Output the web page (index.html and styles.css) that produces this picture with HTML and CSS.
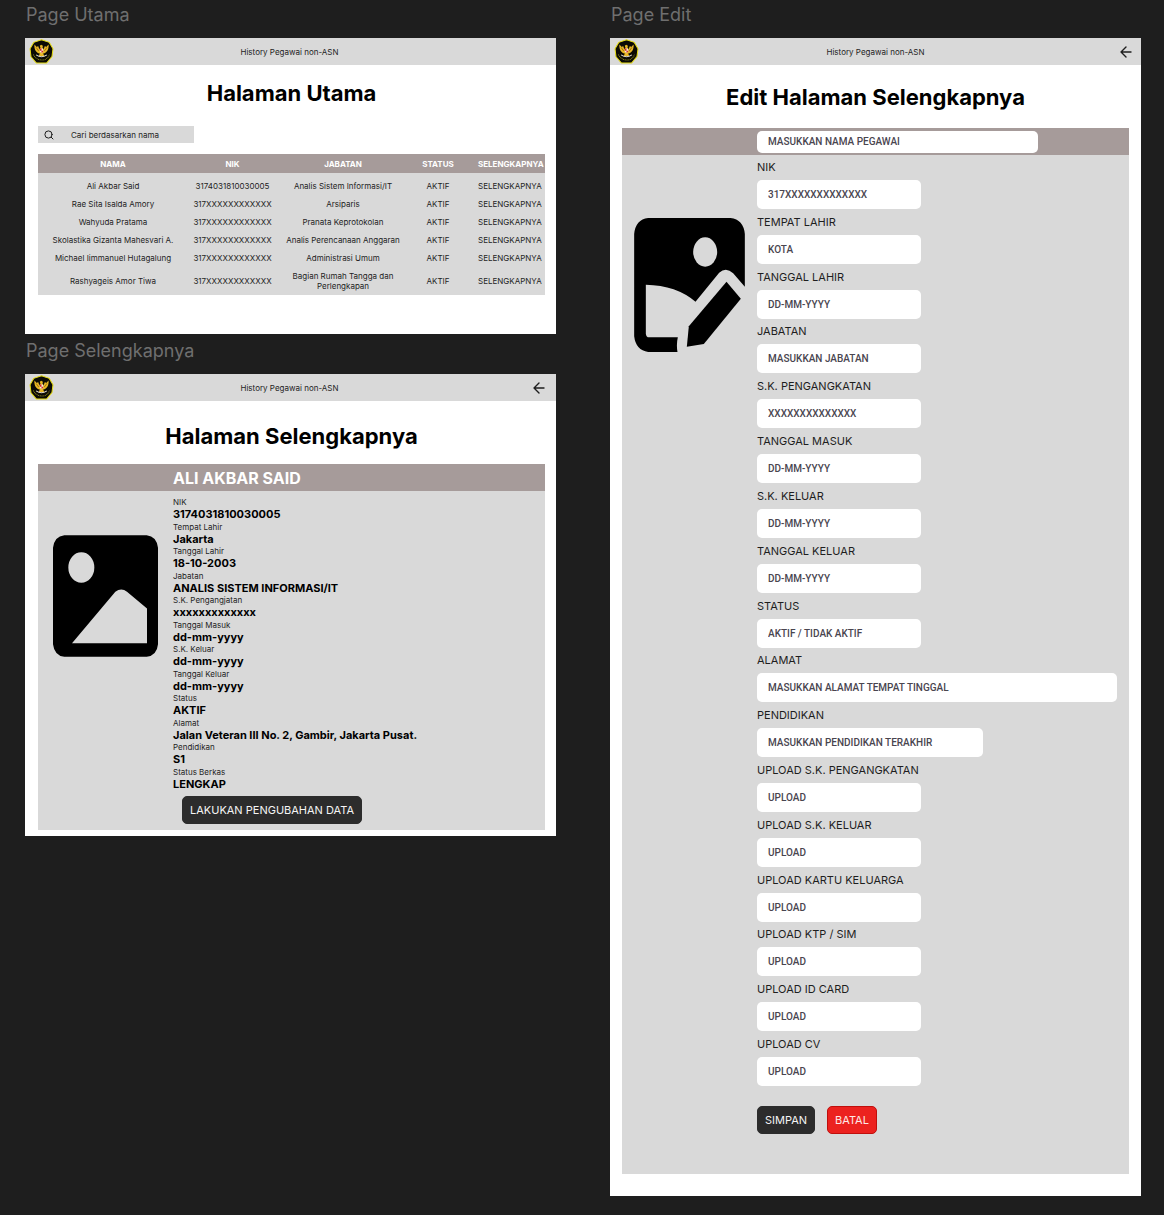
FILE: index.html
```html
<!DOCTYPE html>
<html lang="id">
<head>
<meta charset="utf-8">
<meta name="viewport" content="width=device-width, initial-scale=1">
<title>History Pegawai non-ASN</title>
<link rel="stylesheet" href="styles.css">
</head>
<body>
<svg class="sprite" aria-hidden="true">
  <symbol id="emblem" viewBox="0 0 72 74">
    <path d="M36 2 59 10 70 29 67 52 51 71H21L5 53 2 29 13 10Z" fill="#0b0a05" stroke="#e6dc14" stroke-width="3"/>
    <path d="M15 16C14 30 19 40 31 43L28 50H44L41 43C53 40 58 30 57 16L50 24 46 21 42 31 39 27 40 20 35 17 31 20 33 27 30 31 26 21 22 24Z" fill="#e9b824"/>
    <path d="M20 25 28 36M52 25 44 36" stroke="#7a5209" stroke-width="2"/>
    <path d="M31 28H41V37L36 43 31 37Z" fill="#f3eee4"/>
    <path d="M31 28H36V35H31ZM36 35H41V37L36 42Z" fill="#cf2420"/>
    <path d="M20 47Q36 58 52 47" fill="none" stroke="#ddd9c8" stroke-width="3"/>
    <path d="M12 46Q19 61 36 62T60 46" fill="none" stroke="#8b8516" stroke-width="3" stroke-dasharray="3 2"/>
  </symbol>
  <symbol id="arrow-left" viewBox="0 0 16 16">
    <path d="M13 8H3M8 3 3 8 8 13" fill="none" stroke="#1e1e1e" stroke-width="1.400" stroke-linecap="round" stroke-linejoin="round"/>
  </symbol>
</svg>

<main class="board">
  <div class="column column-overview">
    <section class="page">
      <h2 class="page-label">Page Utama</h2>
      <div class="frame frame-home">
        <header class="topbar">
          <svg class="emblem"><use href="#emblem"/></svg>
          <span class="topbar-title">History Pegawai non-ASN</span>
        </header>
        <div class="content">
          <h1 class="title">Halaman Utama</h1>
          <label class="search">
            <svg class="search-icon" viewBox="0 0 10 10" role="img" aria-label="Cari"><circle cx="4.500" cy="4.500" r="3.600"/><path d="M7.200 7.200 9 9"/></svg>
            <input class="search-input" type="search" placeholder="Cari berdasarkan nama">
          </label>
          <table class="staff">
            <colgroup><col><col class="col-nik"><col class="col-role"><col class="col-status"><col class="col-more"></colgroup>
            <thead>
              <tr><th>NAMA</th><th>NIK</th><th>JABATAN</th><th>STATUS</th><th class="more">SELENGKAPNYA</th></tr>
            </thead>
            <tbody>
              <tr><td>Ali Akbar Said</td><td>3174031810030005</td><td>Analis Sistem Informasi/IT</td><td>AKTIF</td><td class="more"><a href="#detail">SELENGKAPNYA</a></td></tr>
              <tr><td>Rae Sita Isalda Amory</td><td>317XXXXXXXXXXXX</td><td>Arsiparis</td><td>AKTIF</td><td class="more"><a href="#detail">SELENGKAPNYA</a></td></tr>
              <tr><td>Wahyuda Pratama</td><td>317XXXXXXXXXXXX</td><td>Pranata Keprotokolan</td><td>AKTIF</td><td class="more"><a href="#detail">SELENGKAPNYA</a></td></tr>
              <tr><td>Skolastika Gizanta Mahesvari A.</td><td>317XXXXXXXXXXXX</td><td>Analis Perencanaan Anggaran</td><td>AKTIF</td><td class="more"><a href="#detail">SELENGKAPNYA</a></td></tr>
              <tr><td>Michael Iimmanuel Hutagalung</td><td>317XXXXXXXXXXXX</td><td>Administrasi Umum</td><td>AKTIF</td><td class="more"><a href="#detail">SELENGKAPNYA</a></td></tr>
              <tr><td>Rashyageis Amor Tiwa</td><td>317XXXXXXXXXXXX</td><td>Bagian Rumah Tangga dan<br>Perlengkapan</td><td>AKTIF</td><td class="more"><a href="#detail">SELENGKAPNYA</a></td></tr>
            </tbody>
          </table>
        </div>
      </div>
    </section>

    <section class="page" id="detail">
      <h2 class="page-label">Page Selengkapnya</h2>
      <div class="frame frame-detail">
        <header class="topbar">
          <svg class="emblem"><use href="#emblem"/></svg>
          <span class="topbar-title">History Pegawai non-ASN</span>
          <a class="back" href="#" aria-label="Kembali"><svg class="back-icon"><use href="#arrow-left"/></svg></a>
        </header>
        <div class="content">
          <h1 class="title">Halaman Selengkapnya</h1>
          <article class="panel">
            <h3 class="panel-head">ALI AKBAR SAID</h3>
            <svg class="photo" viewBox="0 0 315 365" role="img" aria-label="Foto pegawai">
              <path fill-rule="evenodd" d="M34 0H281Q311 3 315 38V327Q312 360 281 365H34Q4 361 0 327V38Q4 3 34 0ZM85 51A39 46 0 1 0 85 143A39 46 0 1 0 85 51ZM57 324H282V220L222 170Q205 156 187 170Z"/>
            </svg>
            <div class="panel-main">
              <dl class="facts">
                <div><dt>NIK</dt><dd>3174031810030005</dd></div>
                <div><dt>Tempat Lahir</dt><dd>Jakarta</dd></div>
                <div><dt>Tanggal Lahir</dt><dd>18-10-2003</dd></div>
                <div><dt>Jabatan</dt><dd>ANALIS SISTEM INFORMASI/IT</dd></div>
                <div><dt>S.K. Pengangjatan</dt><dd>xxxxxxxxxxxxx</dd></div>
                <div><dt>Tanggal Masuk</dt><dd>dd-mm-yyyy</dd></div>
                <div><dt>S.K. Keluar</dt><dd>dd-mm-yyyy</dd></div>
                <div><dt>Tanggal Keluar</dt><dd>dd-mm-yyyy</dd></div>
                <div><dt>Status</dt><dd>AKTIF</dd></div>
                <div><dt>Alamat</dt><dd>Jalan Veteran III No. 2, Gambir, Jakarta Pusat.</dd></div>
                <div><dt>Pendidikan</dt><dd>S1</dd></div>
                <div><dt>Status Berkas</dt><dd>LENGKAP</dd></div>
              </dl>
              <button class="button button-edit" type="button">LAKUKAN PENGUBAHAN DATA</button>
            </div>
          </article>
        </div>
      </div>
    </section>
  </div>

  <div class="column">
    <section class="page">
      <h2 class="page-label">Page Edit</h2>
      <div class="frame frame-edit">
        <header class="topbar">
          <svg class="emblem"><use href="#emblem"/></svg>
          <span class="topbar-title">History Pegawai non-ASN</span>
          <a class="back" href="#detail" aria-label="Kembali"><svg class="back-icon"><use href="#arrow-left"/></svg></a>
        </header>
        <div class="content">
          <h1 class="title">Edit Halaman Selengkapnya</h1>
          <form class="panel">
            <div class="panel-head">
              <input class="box box-name" type="text" aria-label="Nama pegawai" placeholder="MASUKKAN NAMA PEGAWAI">
            </div>
            <svg class="photo" viewBox="43 55 332 402" role="img" aria-label="Ubah foto">
              <path d="M173 457H85Q48 452 43 410V103Q47 60 85 55H332Q371 60 375 103V261L340 221Q319 200 298 219L227 306Q170 257 78 255V402Q79 413 88 413H174Q169 435 173 457Z"/>
              <path d="M320 246 363 297 252 433 201 441 207 380Z"/>
              <ellipse class="photo-sun" cx="256" cy="157" rx="36" ry="44"/>
            </svg>
            <div class="panel-main">
              <div class="fields">
                <div class="field"><label for="nik">NIK</label><input class="box" id="nik" type="text" placeholder="317XXXXXXXXXXXXX"></div>
                <div class="field"><label for="tempat">TEMPAT LAHIR</label><input class="box" id="tempat" type="text" placeholder="KOTA"></div>
                <div class="field"><label for="lahir">TANGGAL LAHIR</label><input class="box" id="lahir" type="text" placeholder="DD-MM-YYYY"></div>
                <div class="field"><label for="jabatan">JABATAN</label><input class="box" id="jabatan" type="text" placeholder="MASUKKAN JABATAN"></div>
                <div class="field"><label for="sk">S.K. PENGANGKATAN</label><input class="box" id="sk" type="text" placeholder="XXXXXXXXXXXXXX"></div>
                <div class="field"><label for="masuk">TANGGAL MASUK</label><input class="box" id="masuk" type="text" placeholder="DD-MM-YYYY"></div>
                <div class="field"><label for="sk-keluar">S.K. KELUAR</label><input class="box" id="sk-keluar" type="text" placeholder="DD-MM-YYYY"></div>
                <div class="field"><label for="keluar">TANGGAL KELUAR</label><input class="box" id="keluar" type="text" placeholder="DD-MM-YYYY"></div>
                <div class="field"><label for="status">STATUS</label><input class="box" id="status" type="text" placeholder="AKTIF / TIDAK AKTIF"></div>
                <div class="field"><label for="alamat">ALAMAT</label><input class="box box-address" id="alamat" type="text" placeholder="MASUKKAN ALAMAT TEMPAT TINGGAL"></div>
                <div class="field"><label for="pendidikan">PENDIDIKAN</label><input class="box box-school" id="pendidikan" type="text" placeholder="MASUKKAN PENDIDIKAN TERAKHIR"></div>
                <div class="field"><label for="up-sk">UPLOAD S.K. PENGANGKATAN</label><button class="box" id="up-sk" type="button">UPLOAD</button></div>
                <div class="field"><label for="up-keluar">UPLOAD S.K. KELUAR</label><button class="box" id="up-keluar" type="button">UPLOAD</button></div>
                <div class="field"><label for="up-kk">UPLOAD KARTU KELUARGA</label><button class="box" id="up-kk" type="button">UPLOAD</button></div>
                <div class="field"><label for="up-ktp">UPLOAD KTP / SIM</label><button class="box" id="up-ktp" type="button">UPLOAD</button></div>
                <div class="field"><label for="up-id">UPLOAD ID CARD</label><button class="box" id="up-id" type="button">UPLOAD</button></div>
                <div class="field"><label for="up-cv">UPLOAD CV</label><button class="box" id="up-cv" type="button">UPLOAD</button></div>
              </div>
              <div class="actions">
                <button class="button" type="submit">SIMPAN</button>
                <button class="button button-danger" type="reset">BATAL</button>
              </div>
            </div>
          </form>
        </div>
      </div>
    </section>
  </div>
</main>
</body>
</html>
```
FILE: styles.css
```css
*, *::before, *::after { box-sizing: border-box; }

body {
  margin: 0;
  min-height: 100vh;
  background: #1e1e1e;
  color: #1e1e1e;
  font-family: Inter, "Liberation Sans", sans-serif;
  font-size: 8px;
}

h1, h2, h3, dl, dd { margin: 0; }
input, button { font: inherit; border: 0; margin: 0; }
a { color: inherit; text-decoration: none; }
.sprite { display: block; width: 0; height: 0; }

.board {
  display: grid;
  grid-template-columns: 1fr 1fr;
  gap: 54px;
  align-items: start;
  padding: 0 23px 19px 25px;
}

.page-label {
  padding: 3px 0 11px 1px;
  color: #6f6f6f;
  font-size: 18px;
  font-weight: 400;
  line-height: 24px;
}
.page + .page .page-label { padding-top: 5px; }

.frame { background: #fff; }
.content { padding: 0 12px; }
.column-overview .content { padding: 0 11px 0 13px; }
.frame-home { padding-bottom: 39px; }
.frame-detail { padding-bottom: 6px; }
.frame-edit { padding-bottom: 22px; }

/* Top bar */
.topbar {
  display: grid;
  grid-template-columns: 1fr auto 1fr;
  align-items: center;
  height: 27px;
  padding: 0 7px 0 4px;
  background: #d9d9d9;
}
.column-overview .topbar { padding-right: 9px; }
.topbar-title { padding-left: 3px; line-height: 12px; }
.emblem { width: 25px; height: 25px; }
.back { justify-self: end; display: flex; }
.back-icon { width: 16px; height: 16px; }

.title {
  color: #000;
  font-size: 22px;
  font-weight: 700;
  line-height: 28px;
  text-align: center;
}
.frame-home .title { padding: 14px 0 19px; }
.frame-detail .title { padding: 21px 0 14px; }
.frame-edit .title { padding: 18px 0 17px; }

/* Search and table */
.search {
  display: flex;
  align-items: center;
  gap: 17px;
  width: 156px;
  height: 17px;
  padding-left: 6px;
  background: #d9d9d9;
}
.search-icon { width: 10px; height: 10px; fill: none; stroke: #1e1e1e; stroke-linecap: round; }
.search-input {
  flex: 1;
  min-width: 0;
  padding: 0;
  background: none;
  appearance: none;
}
.search-input::placeholder { color: #1e1e1e; }

.staff {
  width: 100%;
  margin-top: 11px;
  border-collapse: collapse;
  table-layout: fixed;
  background: #d9d9d9;
  line-height: 10px;
  text-align: center;
  white-space: nowrap;
}
.col-nik { width: 89px; }
.col-role { width: 132px; }
.col-status { width: 58px; }
.col-more { width: 78px; }
.staff th { height: 19px; padding: 0; background: #a69b9a; color: #fff; font-weight: 700; }
.staff td { padding: 4px 0; }
.staff tbody tr:first-child td { padding-top: 8px; }
.staff .more { padding-left: 11px; text-align: left; }

/* Employee panel */
.panel {
  display: grid;
  grid-template-columns: 135px 1fr;
  align-items: start;
  background: #d9d9d9;
}
.panel-head {
  grid-column: 1 / -1;
  display: flex;
  align-items: center;
  height: 27px;
  padding-left: 135px;
  background: #a69b9a;
  color: #fff;
  font-size: 16px;
  font-weight: 700;
}
.photo { width: 105px; height: 122px; margin: 44px 0 0 15px; }
.frame-edit .photo { width: 111px; height: 134px; margin: 63px 0 0 12px; }
.photo-sun { fill: #d9d9d9; }

.panel-main { padding: 6px 12px 6px 0; }
.facts {
  display: flex;
  flex-direction: column;
  justify-content: space-between;
  min-height: 293px;
}
.facts dt { line-height: 11px; }
.facts dd { color: #000; font-size: 11px; font-weight: 700; line-height: 12px; }

.button {
  height: 28px;
  padding: 0 7px;
  border: 1px solid #2c2c2c;
  border-radius: 5px;
  background: #2c2c2c;
  color: #f5f5f5;
  font-size: 11px;
}
.button-danger { border-color: #c00f0c; background: #ec221f; color: #fee9e7; }
.button-edit { display: block; margin: 6px 0 0 9px; }

/* Edit form */
.frame-edit .panel-main { padding: 5px 12px 40px 0; }
.fields {
  display: flex;
  flex-direction: column;
  justify-content: space-between;
  min-height: 926px;
}
.field { display: grid; gap: 6px; }
.field label { font-size: 11px; line-height: 14px; }
.box {
  width: 164px;
  height: 29px;
  padding: 0 11px;
  border-radius: 5px;
  background: #fff;
  color: #49454f;
  font-family: Roboto, "Liberation Sans", sans-serif;
  font-size: 10px;
  font-weight: 500;
  text-align: left;
}
.box::placeholder { color: #49454f; }
.box-name { width: 281px; height: 22px; }
.box-address { width: 100%; }
.box-school { width: 226px; }
.actions { display: flex; gap: 12px; margin-top: 20px; }
```
